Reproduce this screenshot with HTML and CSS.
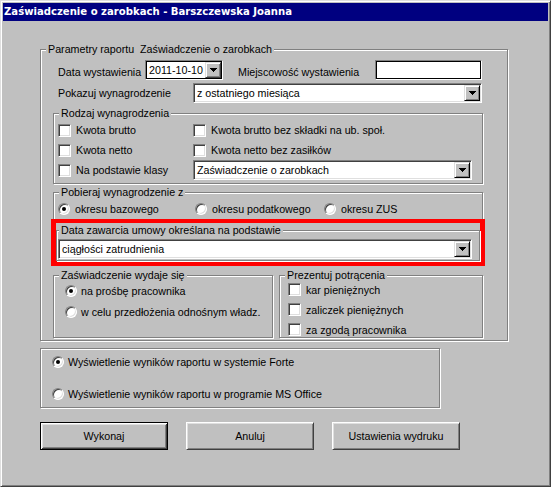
FILE: index.html
```html
<!DOCTYPE html>
<html lang="pl">
<head>
<meta charset="utf-8">
<title>Zaświadczenie o zarobkach</title>
<link rel="stylesheet" href="styles.css">
</head>
<body>
<div class="window">
  <div class="titlebar">Zaświadczenie o zarobkach - Barszczewska Joanna</div>
  <div class="client">
    <fieldset class="group group-main">
      <legend>Parametry raportu&nbsp; Zaświadczenie o zarobkach</legend>
      <div class="row row-first">
        <span class="lbl lbl-date">Data wystawienia</span>
        <div class="combo combo-framed combo-date">
          <span class="combo-text">2011-10-10</span>
          <span class="drop"><svg width="7" height="4" viewBox="0 0 7 4"><path d="M0 0h7v1h-1v1h-1v1h-1v1h-1v-1h-1v-1h-1v-1h-1z" fill="#000"/></svg></span>
        </div>
        <span class="lbl lbl-place">Miejscowość wystawienia</span>
        <div class="edit edit-place"></div>
      </div>
      <div class="row row-second">
        <span class="lbl lbl-show">Pokazuj wynagrodzenie</span>
        <div class="combo combo-show">
          <span class="combo-text">z ostatniego miesiąca</span>
          <span class="drop"><svg width="7" height="4" viewBox="0 0 7 4"><path d="M0 0h7v1h-1v1h-1v1h-1v1h-1v-1h-1v-1h-1v-1h-1z" fill="#000"/></svg></span>
        </div>
      </div>

      <fieldset class="group group-kind">
        <legend>Rodzaj wynagrodzenia</legend>
        <div class="kind-grid">
          <div class="check"><span class="box"></span><span>Kwota brutto</span></div>
          <div class="check"><span class="box"></span><span>Kwota brutto bez składki na ub. społ.</span></div>
          <div class="check"><span class="box"></span><span>Kwota netto</span></div>
          <div class="check"><span class="box"></span><span>Kwota netto bez zasiłków</span></div>
          <div class="check"><span class="box"></span><span>Na podstawie klasy</span></div>
          <div class="combo combo-class">
            <span class="combo-text">Zaświadczenie o zarobkach</span>
            <span class="drop"><svg width="7" height="4" viewBox="0 0 7 4"><path d="M0 0h7v1h-1v1h-1v1h-1v1h-1v-1h-1v-1h-1v-1h-1z" fill="#000"/></svg></span>
          </div>
        </div>
      </fieldset>

      <fieldset class="group group-source">
        <legend>Pobieraj wynagrodzenie z</legend>
        <div class="source-grid">
          <div class="option"><span class="radio checked"></span><span>okresu bazowego</span></div>
          <div class="option"><span class="radio"></span><span>okresu podatkowego</span></div>
          <div class="option"><span class="radio"></span><span>okresu ZUS</span></div>
        </div>
      </fieldset>

      <div class="highlight">
        <fieldset class="group group-contract">
          <legend>Data zawarcia umowy określana na podstawie</legend>
          <div class="combo combo-contract">
            <span class="combo-text">ciągłości zatrudnienia</span>
            <span class="drop"><svg width="7" height="4" viewBox="0 0 7 4"><path d="M0 0h7v1h-1v1h-1v1h-1v1h-1v-1h-1v-1h-1v-1h-1z" fill="#000"/></svg></span>
          </div>
        </fieldset>
      </div>

      <div class="side-row">
        <fieldset class="group group-issue">
          <legend>Zaświadczenie wydaje się</legend>
          <div class="issue-list">
            <div class="option"><span class="radio checked"></span><span>na prośbę pracownika</span></div>
            <div class="option"><span class="radio"></span><span>w celu przedłożenia odnośnym władz.</span></div>
          </div>
        </fieldset>
        <fieldset class="group group-deduct">
          <legend>Prezentuj potrącenia</legend>
          <div class="deduct-list">
            <div class="check"><span class="box"></span><span>kar pieniężnych</span></div>
            <div class="check"><span class="box"></span><span>zaliczek pieniężnych</span></div>
            <div class="check"><span class="box"></span><span>za zgodą pracownika</span></div>
          </div>
        </fieldset>
      </div>
    </fieldset>

    <div class="panel-output">
      <div class="option"><span class="radio checked"></span><span>Wyświetlenie wyników raportu w systemie Forte</span></div>
      <div class="option"><span class="radio"></span><span>Wyświetlenie wyników raportu w programie MS Office</span></div>
    </div>

    <div class="buttons">
      <button class="btn btn-default" type="button">Wykonaj</button>
      <button class="btn" type="button">Anuluj</button>
      <button class="btn" type="button">Ustawienia wydruku</button>
    </div>
  </div>
</div>
</body>
</html>
```

FILE: styles.css
```css
* {
  box-sizing: border-box;
}

html,
body {
  margin: 0;
  padding: 0;
}

body {
  background: #c0c0c0;
  font-family: "Liberation Sans", Arial, sans-serif;
  font-size: 10.7px;
  color: #000;
}

.window {
  width: 551px;
  height: 487px;
  background: #c0c0c0;
  border: 1px solid;
  border-color: #dfdfdf #404040 #404040 #dfdfdf;
  box-shadow: inset 1px 1px #fff, inset -1px -1px #808080;
  padding: 2px;
  display: flex;
  flex-direction: column;
}

.titlebar {
  height: 18px;
  background: #000080;
  color: #fff;
  font-family: "DejaVu Sans", sans-serif;
  font-weight: bold;
  font-size: 10.1px;
  line-height: 18px;
  padding-left: 1px;
  white-space: nowrap;
  overflow: hidden;
}

.client {
  padding: 22px 0 0 37px;
}

/* etched group boxes */
.group {
  margin: 0;
  min-width: 0;
  border: 1px solid #808080;
  box-shadow: inset 1px 1px #fff, 1px 1px #fff;
}

.group > legend {
  padding: 0 2px;
  line-height: 13px;
  background: #c0c0c0;
  white-space: nowrap;
}

.group-main {
  width: 468px;
  padding: 4px 24px 2px 12px;
}

.group-main > legend {
  margin-left: -7px;
}

.row {
  display: flex;
  align-items: center;
  height: 20px;
  padding-left: 5px;
}

.row-second {
  margin-top: 3px;
}

.lbl {
  white-space: nowrap;
}

.row-first .lbl {
  padding-top: 4px;
}

.lbl-date {
  width: 87px;
}

.lbl-place {
  width: 137px;
  margin-left: 15px;
}

.lbl-show {
  width: 135px;
}

/* combo boxes */
.combo {
  display: flex;
  height: 20px;
  border: 1px solid;
  border-color: #808080 #fff #fff #808080;
  box-shadow: inset 1px 1px #404040, inset -1px -1px #dfdfdf;
  padding: 1px;
  background: #fff;
}

.combo-framed {
  box-shadow: inset 0 0 0 1px #000;
}

.combo-text {
  flex: 1;
  padding-left: 2px;
  line-height: 16px;
  white-space: nowrap;
  overflow: hidden;
}

.drop {
  width: 16px;
  flex: none;
  display: flex;
  align-items: center;
  justify-content: center;
  background: #c0c0c0;
  border: 1px solid;
  border-color: #dfdfdf #000 #000 #dfdfdf;
  box-shadow: inset 1px 1px #fff, inset -1px -1px #808080;
}

.combo-framed .drop {
  border-color: #dfdfdf #404040 #404040 #dfdfdf;
}

.drop svg {
  display: block;
}

.combo-date {
  width: 78px;
}

.combo-show {
  width: 289px;
}

.combo-class {
  width: 279px;
}

.combo-contract {
  width: 414px;
}

.edit {
  height: 20px;
  background: #fff;
  border: 1px solid;
  border-color: #808080 #fff #fff #808080;
  box-shadow: inset 0 0 0 1px #000;
}

.edit-place {
  width: 107px;
}

/* checkboxes and radios */
.check,
.option {
  display: flex;
  align-items: center;
  white-space: nowrap;
}

.check {
  gap: 5px;
}

.option {
  gap: 5px;
}

.box {
  flex: none;
  width: 13px;
  height: 13px;
  background: #fff;
  border: 1px solid;
  border-color: #808080 #fff #fff #808080;
  box-shadow: inset 1px 1px #404040, inset -1px -1px #dfdfdf;
}

.radio {
  flex: none;
  position: relative;
  width: 12px;
  height: 12px;
  border-radius: 50%;
  background: #fff;
  border: 1px solid;
  border-color: #808080 #fff #fff #808080;
  box-shadow: inset 1px 1px #404040, inset -1px -1px #dfdfdf;
}

.radio.checked::after {
  content: "";
  position: absolute;
  left: 3px;
  top: 3px;
  width: 4px;
  height: 4px;
  border-radius: 50%;
  background: #000;
}

/* Rodzaj wynagrodzenia */
.group-kind {
  margin-top: 4px;
  padding: 0 4px 3px 4px;
}

.group-kind > legend,
.group-source > legend {
  margin-left: 1px;
}

.kind-grid {
  display: grid;
  grid-template-columns: 135px 1fr;
  grid-auto-rows: 20px;
  align-items: center;
}

/* Pobieraj wynagrodzenie z */
.group-source {
  margin-top: 2px;
  padding: 0 4px;
}

.source-grid {
  display: grid;
  grid-template-columns: 137px 129px 1fr;
  height: 20px;
  align-items: center;
}

/* red highlight */
.highlight {
  border: 5px solid #f00;
  border-top-width: 4px;
  margin: -1px -2px 0;
}

.group-contract {
  margin-top: 1px;
  padding: 2px 1px 1px 1px;
}

.group-contract > legend {
  margin-left: 1px;
}

/* lower side groups */
.side-row {
  display: flex;
  gap: 6px;
  margin-top: 3px;
}

.group-issue {
  width: 220px;
  padding: 0 4px 14px 11px;
}

.group-issue > legend {
  margin-left: -6px;
}

.issue-list {
  display: flex;
  flex-direction: column;
  gap: 3px;
}

.issue-list .option {
  height: 18px;
  gap: 4px;
}

.group-deduct {
  width: 204px;
  padding: 0 4px 0 8px;
}

.group-deduct > legend {
  margin-left: -3px;
}

.deduct-list {
  display: flex;
  flex-direction: column;
  gap: 5px;
}

.deduct-list .check {
  height: 15px;
}

/* output panel */
.panel-output {
  margin-top: 7px;
  width: 400px;
  border: 1px solid #808080;
  box-shadow: inset 1px 1px #fff, 1px 1px #fff;
  padding: 6px 11px;
  display: flex;
  flex-direction: column;
  gap: 18px;
}

.panel-output .option {
  height: 14px;
  gap: 4px;
}

/* buttons */
.buttons {
  display: flex;
  gap: 18px;
  margin-top: 14px;
}

.btn {
  font: inherit;
  color: #000;
  width: 128px;
  height: 28px;
  padding: 0;
  background: #c0c0c0;
  border: 1px solid;
  border-color: #fff #404040 #404040 #fff;
  box-shadow: inset 1px 1px #dfdfdf, inset -1px -1px #808080;
}

.btn-default {
  border-color: #000;
  box-shadow: inset 1px 1px #fff, inset -1px -1px #404040, inset 2px 2px #dfdfdf, inset -2px -2px #808080;
}
```
